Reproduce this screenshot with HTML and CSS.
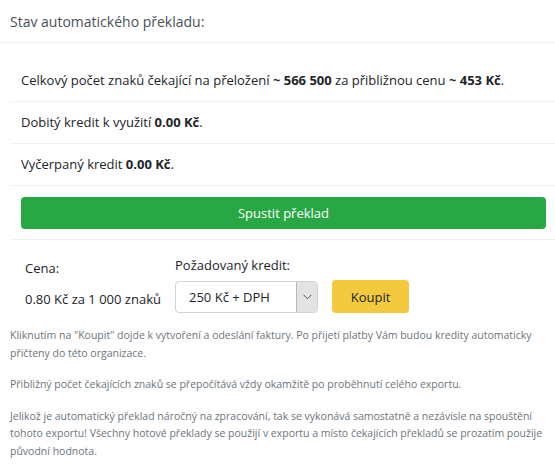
FILE: index.html
```html
<!DOCTYPE html>
<html lang="cs">
<head>
<meta charset="utf-8">
<link rel="stylesheet" href="styles.css">
</head>
<body>
<div class="card">
  <div class="card-header">Stav automatického překladu:</div>
  <div class="card-body">
    <div class="rows">
      <div class="row">Celkový počet znaků čekající na přeložení <b>~ 566 500</b> za přibližnou cenu <b>~ 453 Kč</b>.</div>
      <div class="row">Dobitý kredit k využití <b>0.00 Kč</b>.</div>
      <div class="row">Vyčerpaný kredit <b>0.00 Kč</b>.</div>
      <div class="row row-btn"><button class="btn-green">Spustit překlad</button></div>
    </div>
    <div class="buy">
      <div class="col-price">
        <div class="label">Cena:</div>
        <div class="price">0.80 Kč za 1 000 znaků</div>
      </div>
      <div class="col-credit">
        <div class="label">Požadovaný kredit:</div>
        <div class="controls">
          <div class="select">
            <span class="select-val">250 Kč + DPH</span>
            <span class="select-arrow"><svg width="9" height="6" viewBox="0 0 9 6"><path d="M0.5 0.8 L4.5 4.8 L8.5 0.8" fill="none" stroke="#555" stroke-width="1"/></svg></span>
          </div>
          <button class="btn-yellow">Koupit</button>
        </div>
      </div>
    </div>
    <div class="notes">
      <p>Kliknutím na "Koupit" dojde k vytvoření a odeslání faktury. Po přijetí platby Vám budou kredity automaticky přičteny do této organizace.</p>
      <p>Přibližný počet čekajících znaků se přepočítává vždy okamžitě po proběhnutí celého exportu.</p>
      <p>Jelikož je automatický překlad náročný na zpracování, tak se vykonává samostatně a nezávisle na spouštění tohoto exportu! Všechny hotové překlady se použijí v exportu a místo čekajících překladů se prozatím použije původní hodnota.</p>
    </div>
  </div>
</div>
</body>
</html>
```
FILE: styles.css
```css
* { box-sizing: border-box; }
html, body { margin: 0; padding: 0; background: #fff; }
body {
  font-family: "Open Sans", "Noto Sans", sans-serif;
  color: #212529;
  width: 560px;
}
.card-header {
  height: 43px;
  padding: 0 10px;
  display: flex;
  align-items: center;
  font-size: 14px;
  color: #495057;
  border-bottom: 1px solid #edf1f4;
}
.card-body {
  padding: 17px 0 0 10px;
}
.row {
  padding: 11px 11px;
  font-size: 13px;
  line-height: 19px;
  border-bottom: 1px solid #edf1f4;
}
.row b { font-weight: 700; }
.row-btn { padding: 11px 11px 10px; }
.btn-green {
  display: block;
  width: 525px;
  height: 32px;
  border: none;
  border-radius: 4px;
  background: #28a745;
  color: #fff;
  font-family: inherit;
  font-size: 13px;
}
.buy {
  display: flex;
  padding: 16px 0 0 15px;
}
.col-price { width: 150px; }
.label {
  font-size: 13px;
  line-height: 18px;
  color: #212529;
}
.col-price .label { padding-top: 3px; }
.price {
  font-size: 13px;
  line-height: 18px;
  margin-top: 13px;
  color: #212529;
}
.controls {
  display: flex;
  align-items: center;
  margin-top: 6px;
  gap: 14px;
}
.select {
  width: 143px;
  height: 32px;
  border: 1px solid #ced4da;
  border-radius: 4px;
  display: flex;
  overflow: hidden;
}
.select-val {
  flex: 1;
  display: flex;
  align-items: center;
  padding-left: 13px;
  font-size: 13px;
  color: #212529;
}
.select-arrow {
  width: 21px;
  background: #e3e3e3;
  border-left: 1px solid #b8b8b8;
  display: flex;
  align-items: center;
  justify-content: center;
}
.btn-yellow {
  width: 77px;
  height: 33px;
  border: none;
  border-radius: 4px;
  background: #f3ca3e;
  color: #212529;
  font-family: inherit;
  font-size: 13px;
}
.notes {
  padding: 14px 0 0 0;
}
.notes p {
  margin: 0 0 14px;
  font-size: 10.5px;
  line-height: 17.5px;
  color: #6c757d;
}
```
